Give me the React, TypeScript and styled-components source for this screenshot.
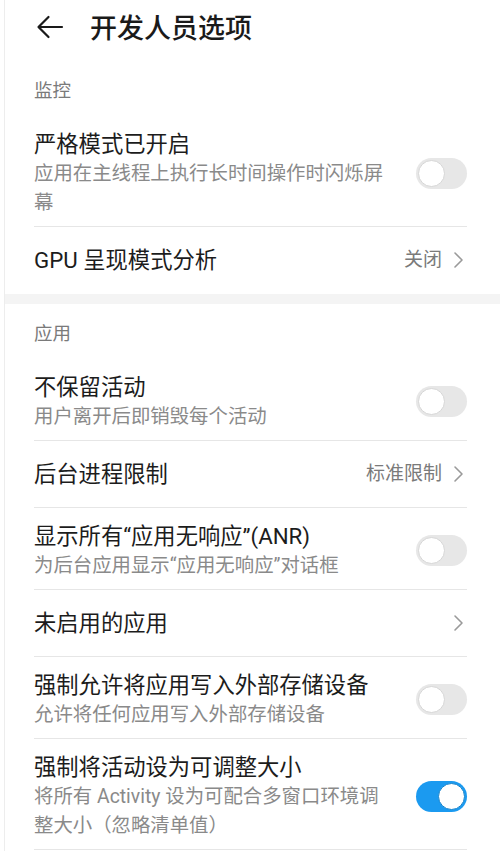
import React from "react";
import styled, { createGlobalStyle } from "styled-components";

const Global = createGlobalStyle`
  html, body { margin: 0; padding: 0; background: #ffffff; }
  body { font-family: Roboto, "Noto Sans CJK SC", sans-serif; -webkit-font-smoothing: antialiased; }
  * { box-sizing: border-box; }
`;

const Page = styled.div`
  margin-left: 4px;
  border-left: 1px solid #ededed;
  min-height: 851px;
  background: #fff;
`;

const TopBar = styled.div`
  height: 61px;
  display: flex;
  align-items: center;
  padding-left: 31px;
  padding-bottom: 7px;
`;

const BackButton = styled.div`
  width: 28px;
  height: 28px;
  display: flex;
  align-items: center;
  justify-content: center;
`;

const PageTitle = styled.h1`
  margin: 0 0 0 26px;
  font-size: 27px;
  line-height: 36px;
  font-weight: 500;
  color: #1a1a1a;
  font-family: "Noto Sans CJK SC", sans-serif;
`;

const SectionHeader = styled.div`
  padding: 16px 29px 15px;
  font-size: 18.5px;
  line-height: 24px;
  color: #7a7a7a;
  font-family: "Noto Sans CJK SC", sans-serif;
`;

const Band = styled.div`
  height: 10px;
  background: #f4f4f4;
`;

const Row = styled.div<{ $single?: boolean; $divider?: boolean }>`
  margin: 0 33px 0 29px;
  display: flex;
  align-items: center;
  padding: ${(p) => (p.$single ? "18px 0 18px" : "13px 0 9px")};
  border-bottom: ${(p) => (p.$divider ? "1px solid #e6e6e6" : "1px solid transparent")};
`;

const TextBlock = styled.div`
  flex: 1;
  max-width: 356px;
  display: flex;
  flex-direction: column;
`;

const Title = styled.div`
  font-size: 22.3px;
  line-height: 30px;
  color: #1c1c1c;
`;

const Sub = styled.div`
  font-size: 19.4px;
  line-height: 29px;
  color: #8a8a8a;
`;

const Trailing = styled.div`
  margin-left: auto;
  display: flex;
  align-items: center;
  gap: 11px;
`;

const Value = styled.span`
  font-size: 19px;
  line-height: 26px;
  color: #7a7a7a;
`;

const ChevronBox = styled.span`
  display: flex;
  margin-right: 3px;
`;

const Track = styled.div<{ $on?: boolean }>`
  position: relative;
  width: 51px;
  height: 31px;
  border-radius: 16px;
  background: ${(p) => (p.$on ? "#1b9af0" : "#e7e7e7")};
  flex-shrink: 0;
`;

const Knob = styled.div<{ $on?: boolean }>`
  position: absolute;
  top: 2px;
  left: ${(p) => (p.$on ? "22px" : "2px")};
  width: 27px;
  height: 27px;
  border-radius: 50%;
  background: #fff;
  border: 1px solid ${(p) => (p.$on ? "#1784cc" : "#d6d6d6")};
`;

const Toggle = ({ on }: { on?: boolean }) => (
  <Track $on={on}>
    <Knob $on={on} />
  </Track>
);

const Chevron = () => (
  <ChevronBox>
    <svg width="11" height="18" viewBox="0 0 11 18" fill="none">
      <path d="M2 2 L9 9 L2 16" stroke="#9a9a9a" strokeWidth="1.6" strokeLinecap="round" strokeLinejoin="round" />
    </svg>
  </ChevronBox>
);

const BackArrow = () => (
  <svg width="28" height="24" viewBox="0 0 28 24" fill="none">
    <path d="M26 12 H3 M12.5 2 L2.5 12 L12.5 22" stroke="#1a1a1a" strokeWidth="2.2" strokeLinecap="round" strokeLinejoin="round" />
  </svg>
);

type Item = {
  title: string;
  sub?: string;
  toggle?: boolean;
  on?: boolean;
  value?: string;
  chevron?: boolean;
  divider?: boolean;
};

const monitor: Item[] = [
  { title: "严格模式已开启", sub: "应用在主线程上执行长时间操作时闪烁屏幕", toggle: true, divider: true },
  { title: "GPU 呈现模式分析", value: "关闭", chevron: true },
];

const apps: Item[] = [
  { title: "不保留活动", sub: "用户离开后即销毁每个活动", toggle: true, divider: true },
  { title: "后台进程限制", value: "标准限制", chevron: true, divider: true },
  { title: "显示所有“应用无响应”(ANR)", sub: "为后台应用显示“应用无响应”对话框", toggle: true, divider: true },
  { title: "未启用的应用", chevron: true, divider: true },
  { title: "强制允许将应用写入外部存储设备", sub: "允许将任何应用写入外部存储设备", toggle: true, divider: true },
  { title: "强制将活动设为可调整大小", sub: "将所有 Activity 设为可配合多窗口环境调整大小（忽略清单值）", toggle: true, on: true, divider: true },
];

const SettingRow = ({ item }: { item: Item }) => (
  <Row $single={!item.sub} $divider={item.divider}>
    <TextBlock>
      <Title>{item.title}</Title>
      {item.sub && <Sub>{item.sub}</Sub>}
    </TextBlock>
    <Trailing>
      {item.value && <Value>{item.value}</Value>}
      {item.chevron && <Chevron />}
      {item.toggle && <Toggle on={item.on} />}
    </Trailing>
  </Row>
);

export default function App() {
  return (
    <>
      <Global />
      <Page>
        <TopBar>
          <BackButton>
            <BackArrow />
          </BackButton>
          <PageTitle>开发人员选项</PageTitle>
        </TopBar>
        <SectionHeader>监控</SectionHeader>
        {monitor.map((it) => (
          <SettingRow key={it.title} item={it} />
        ))}
        <Band />
        <SectionHeader>应用</SectionHeader>
        {apps.map((it) => (
          <SettingRow key={it.title} item={it} />
        ))}
      </Page>
    </>
  );
}
